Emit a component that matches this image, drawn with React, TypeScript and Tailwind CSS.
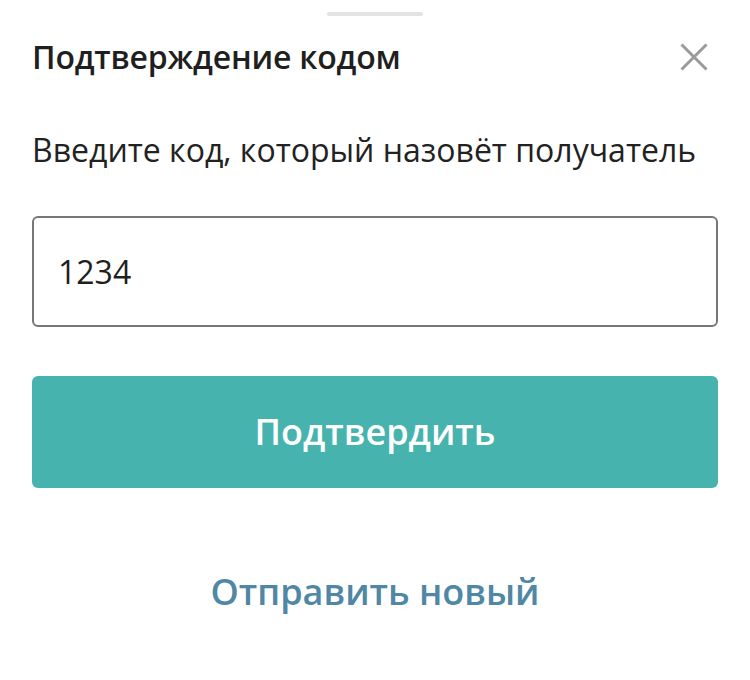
import React from "react";

const font = { fontFamily: '"Open Sans", "Noto Sans", sans-serif' };

export default function App() {
  const [code, setCode] = React.useState("1234");

  return (
    <div className="w-[750px] h-[680px] bg-white" style={font}>
      <div className="flex justify-center pt-3">
        <div className="w-24 h-1 rounded-full bg-[#e3e3e3]" />
      </div>
      <div className="px-8">
        <div className="flex items-center justify-between mt-[25px]">
          <h2 className="text-[32px] font-semibold text-[#1f1f1f] leading-none tracking-[-0.2px]">
            Подтверждение кодом
          </h2>
          <button className="w-8 h-8 flex items-center justify-center mr-2 text-[#9a9a9a]">
            <svg width="28" height="28" viewBox="0 0 28 28" fill="none">
              <path d="M1.5 1.5 L26.5 26.5 M26.5 1.5 L1.5 26.5" stroke="currentColor" strokeWidth="3" />
            </svg>
          </button>
        </div>
        <p className="mt-[61px] text-[32px] text-[#222] leading-none">
          Введите код, который назовёт получатель
        </p>
        <input
          value={code}
          onChange={(e) => setCode(e.target.value)}
          className="mt-[50px] block w-full h-[111px] px-6 rounded-md border-2 border-[#777] text-[32px] text-[#1f1f1f] outline-none"
          style={font}
        />
        <button className="mt-[49px] w-full h-[112px] rounded-md bg-[#46b3ae] text-white text-[36px] font-semibold">
          Подтвердить
        </button>
        <div className="flex justify-center mt-[86px]">
          <button className="text-[36px] font-semibold text-[#4f87a4] leading-none">
            Отправить новый
          </button>
        </div>
      </div>
    </div>
  );
}
